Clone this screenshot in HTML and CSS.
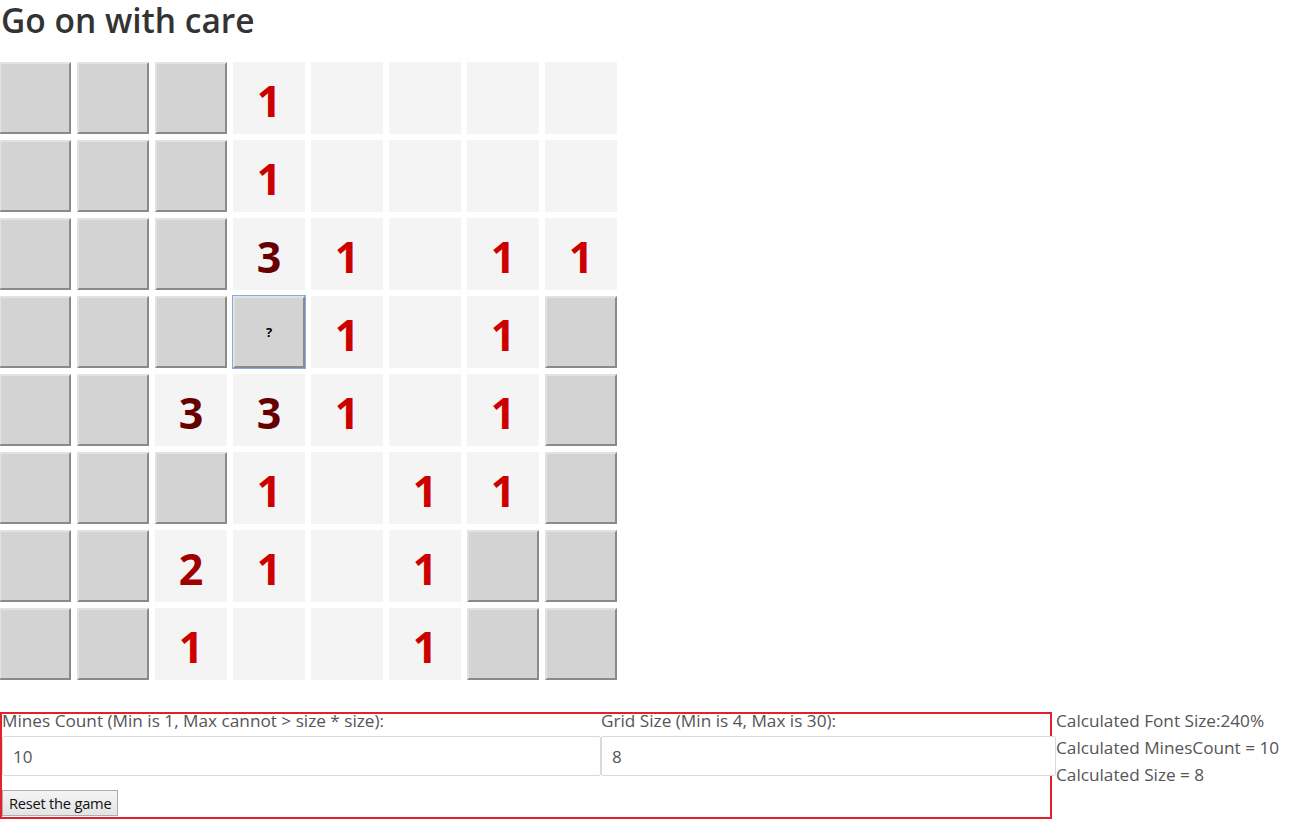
FILE: index.html
```html
<!DOCTYPE html>
<html>
<head>
<meta charset="utf-8">
<title>Minesweeper</title>
<link rel="stylesheet" href="styles.css">
</head>
<body>
<h1 class="title">Go on with care</h1>
<div class="board">
  <div class="cell hidden"></div><div class="cell hidden"></div><div class="cell hidden"></div><div class="cell open n1">1</div><div class="cell open"></div><div class="cell open"></div><div class="cell open"></div><div class="cell open"></div>
  <div class="cell hidden"></div><div class="cell hidden"></div><div class="cell hidden"></div><div class="cell open n1">1</div><div class="cell open"></div><div class="cell open"></div><div class="cell open"></div><div class="cell open"></div>
  <div class="cell hidden"></div><div class="cell hidden"></div><div class="cell hidden"></div><div class="cell open n3">3</div><div class="cell open n1">1</div><div class="cell open"></div><div class="cell open n1">1</div><div class="cell open n1">1</div>
  <div class="cell hidden"></div><div class="cell hidden"></div><div class="cell hidden"></div><div class="cell hidden flagged">?</div><div class="cell open n1">1</div><div class="cell open"></div><div class="cell open n1">1</div><div class="cell hidden"></div>
  <div class="cell hidden"></div><div class="cell hidden"></div><div class="cell open n3">3</div><div class="cell open n3">3</div><div class="cell open n1">1</div><div class="cell open"></div><div class="cell open n1">1</div><div class="cell hidden"></div>
  <div class="cell hidden"></div><div class="cell hidden"></div><div class="cell hidden"></div><div class="cell open n1">1</div><div class="cell open"></div><div class="cell open n1">1</div><div class="cell open n1">1</div><div class="cell hidden"></div>
  <div class="cell hidden"></div><div class="cell hidden"></div><div class="cell open n2">2</div><div class="cell open n1">1</div><div class="cell open"></div><div class="cell open n1">1</div><div class="cell hidden"></div><div class="cell hidden"></div>
  <div class="cell hidden"></div><div class="cell hidden"></div><div class="cell open n1">1</div><div class="cell open"></div><div class="cell open"></div><div class="cell open n1">1</div><div class="cell hidden"></div><div class="cell hidden"></div>
</div>
<div class="bottom">
  <form class="settings">
    <div class="fields">
      <div class="field field-mines">
        <label class="label">Mines Count (Min is 1, Max cannot &gt; size * size):</label>
        <input class="input" type="text" value="10">
      </div>
      <div class="field field-size">
        <label class="label">Grid Size (Min is 4, Max is 30):</label>
        <input class="input input-wide" type="text" value="8">
      </div>
    </div>
    <button class="reset" type="button">Reset the game</button>
  </form>
  <div class="info">
    <div class="info-line">Calculated Font Size:240%</div>
    <div class="info-line">Calculated MinesCount = 10</div>
    <div class="info-line">Calculated Size = 8</div>
  </div>
</div>
</body>
</html>
```
FILE: styles.css
```css
html, body {
  margin: 0;
  padding: 0;
  background: #fff;
}
body {
  font-family: "Open Sans", "Noto Sans", sans-serif;
  color: #555;
  font-size: 17px;
}
.title {
  margin: 0;
  padding-left: 1px;
  font-size: 33.5px;
  font-weight: 600;
  color: #333;
  line-height: 40px;
  height: 62px;
}
.board {
  display: grid;
  grid-template-columns: repeat(8, 72px);
  grid-auto-rows: 72px;
  gap: 6px;
  margin-left: -1px;
  width: 618px;
}
.cell {
  box-sizing: border-box;
  display: flex;
  align-items: center;
  justify-content: center;
  font-family: "Open Sans", "Noto Sans", sans-serif;
  font-weight: 700;
  font-size: 43px;
  padding-top: 4px;
}
.hidden {
  background: #d3d3d3;
  border-top: 2px solid #e2e2e2;
  border-left: 2px solid #e2e2e2;
  border-right: 2px solid #8a8a8a;
  border-bottom: 2px solid #8a8a8a;
}
.open {
  background: #f4f4f4;
}
.n1 { color: #cc0000; }
.n2 { color: #a00000; }
.n3 { color: #660000; }
.flagged {
  font-size: 13px;
  color: #000;
  padding-top: 0;
  box-shadow: 0 0 0 1px #85aaea;
}
.bottom {
  display: flex;
  align-items: flex-start;
  margin-top: 32px;
}
.settings {
  box-sizing: border-box;
  width: 1052px;
  height: 107px;
  border: 2px solid #e3202b;
  margin: 0;
}
.fields {
  display: grid;
  grid-template-columns: 599px 449px;
}
.field {
  display: flex;
  flex-direction: column;
}
.label {
  line-height: 22px;
  margin-top: -4px;
  margin-bottom: 4px;
  font-size: 17.2px;
}
.input {
  box-sizing: border-box;
  height: 40px;
  border: 1px solid #dadada;
  border-radius: 2px;
  font-family: "Open Sans", "Noto Sans", sans-serif;
  font-size: 17px;
  color: #555;
  padding: 0 10px;
  margin: 0;
  width: 599px;
}
.input-wide {
  width: 455px;
}
.reset {
  margin-top: 14px;
  height: 26px;
  padding: 0 6px;
  font-family: "Open Sans", "Noto Sans", sans-serif;
  font-size: 14.7px;
  color: #111;
  background: linear-gradient(#f4f4f4, #e4e4e4);
  border: 1px solid #adadad;
  border-radius: 0;
  letter-spacing: -0.25px;
}
.info {
  margin-left: 4px;
  margin-top: -5px;
}
.info-line {
  line-height: 27px;
  font-size: 17.2px;
}
```
